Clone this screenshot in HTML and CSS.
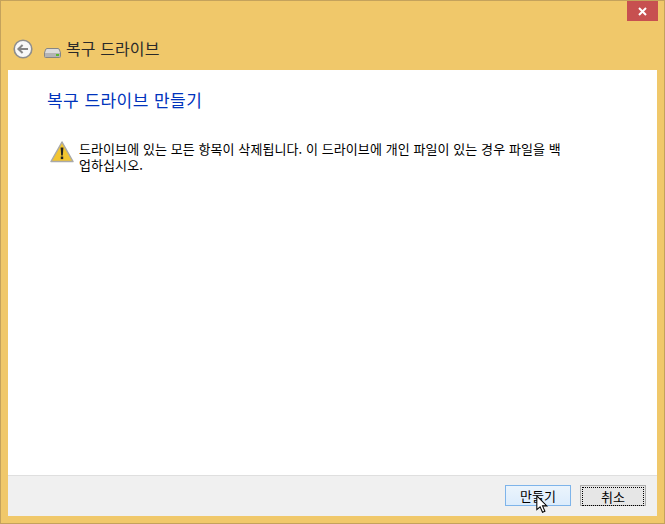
FILE: index.html
```html
<!DOCTYPE html>
<html lang="ko">
<head>
<meta charset="utf-8">
<title>복구 드라이브</title>
<link rel="stylesheet" href="styles.css">
</head>
<body>
<div class="window">
  <div class="caption">
    <div class="close"><svg width="11" height="11" viewBox="0 0 11 11"><path d="M2 2 L9 9 M9 2 L2 9" stroke="#fff" stroke-width="2" fill="none"/></svg></div>
  </div>
  <div class="navbar">
    <svg class="back" width="20" height="20" viewBox="0 0 20 20">
      <circle cx="10" cy="10" r="8.8" fill="#f8f8f8" stroke="#8e8e8e" stroke-width="1.6"/>
      <path d="M15 10 H6 M9.6 6 L5.4 10 L9.6 14" stroke="#858585" stroke-width="2" fill="none"/>
    </svg>
    <svg class="drive" width="17" height="10" viewBox="0 0 17 10">
      <path d="M3 .5 H14 Q15 .5 15.6 2 L16.5 5 V8.5 Q16.5 9.5 15.5 9.5 H1.5 Q.5 9.5 .5 8.5 V5 L1.4 2 Q2 .5 3 .5 Z" fill="#dcdcdc" stroke="#858585"/>
      <rect x="1" y="5" width="15" height="4" fill="#b4b4b4"/>
      <rect x="12" y="6" width="3" height="2" fill="#58b82e"/>
    </svg>
    <span class="navtitle">복구 드라이브</span>
  </div>
  <div class="client">
    <main class="content">
      <h1 class="heading">복구 드라이브 만들기</h1>
      <div class="warning">
        <svg class="warnicon" width="24" height="22" viewBox="0 0 24 22">
          <path d="M12 1 L23 20.5 H1 Z" fill="#f2c530" stroke="#a9a9a9" stroke-width="1.5" stroke-linejoin="round"/>
          <path d="M10.6 6.5 H13.4 L12.8 14.5 H11.2 Z" fill="#222"/>
          <rect x="10.8" y="15.5" width="2.4" height="2.6" fill="#222"/>
        </svg>
        <p class="message">드라이브에 있는 모든 항목이 삭제됩니다. 이 드라이브에 개인 파일이 있는 경우 파일을 백업하십시오.</p>
      </div>
    </main>
    <footer class="footer">
      <button class="btn btn-hover">만들기
        <svg class="cursor" width="14" height="19" viewBox="0 0 14 22">
          <path d="M1 1 V17 L4.8 13.6 L7.6 20 L10.4 18.8 L7.6 12.6 H12.6 Z" fill="#fff" stroke="#000" stroke-width="1.2"/>
        </svg>
      </button>
      <button class="btn btn-focus"><span class="focus">취소</span></button>
    </footer>
  </div>
</div>
</body>
</html>
```
FILE: styles.css
```css
html, body { margin: 0; padding: 0; }
body {
  width: 665px;
  height: 524px;
  overflow: hidden;
  font-family: "Noto Sans CJK KR", "Liberation Sans", sans-serif;
}
.window {
  box-sizing: border-box;
  width: 665px;
  height: 524px;
  background: #f0c86a;
  border: 1px solid #c4a25c;
  display: flex;
  flex-direction: column;
}
.caption {
  height: 20px;
  display: flex;
  justify-content: flex-end;
  padding-right: 6px;
}
.close {
  width: 31px;
  height: 20px;
  background: #c75050;
  display: flex;
  align-items: center;
  justify-content: center;
}
.navbar {
  height: 49px;
  display: flex;
  align-items: center;
  padding-left: 12px;
  padding-top: 7px;
  box-sizing: border-box;
}
.back { margin-right: 11px; }
.drive { margin-right: 5px; margin-top: 8px; }
.navtitle { font-size: 16px; color: #2a2a2a; line-height: 20px; margin-top: -2px; letter-spacing: .1px; }
.client {
  flex: 1;
  margin: 0 7px 7px;
  background: #fff;
  display: flex;
  flex-direction: column;
}
.content { flex: 1; padding: 19px 39px 0; }
.heading {
  margin: 0;
  font-size: 17px;
  font-weight: 400;
  line-height: 22px;
  color: #0033bc;
  letter-spacing: .45px;
}
.warning {
  display: flex;
  margin-top: 30px;
  margin-left: 3px;
}
.warnicon { margin-top: 0; margin-right: 5px; flex: none; }
.message {
  margin: 0;
  width: 490px;
  font-size: 13px;
  line-height: 16px;
  letter-spacing: .08px;
  color: #000;
}
.footer {
  height: 41px;
  box-sizing: border-box;
  background: #f0f0f0;
  border-top: 1px solid #dfdfdf;
  display: flex;
  justify-content: flex-end;
  align-items: flex-start;
  gap: 9px;
  padding: 9px 11px 0 0;
}
.btn {
  position: relative;
  box-sizing: border-box;
  width: 66px;
  height: 21px;
  padding: 0;
  font-family: inherit;
  font-size: 13px;
  line-height: 19px;
  color: #000;
}
.btn-hover {
  background: linear-gradient(#ebf4fc, #dcecfc);
  border: 1px solid #7eb4ea;
}
.btn-focus {
  background: #e6e6e6;
  border: 1px solid #adadad;
  padding: 1px;
}
.focus {
  display: block;
  height: 17px;
  line-height: 17px;
  border: 1px dotted #000;
}
.cursor {
  position: absolute;
  left: 29px;
  top: 9px;
}
```
